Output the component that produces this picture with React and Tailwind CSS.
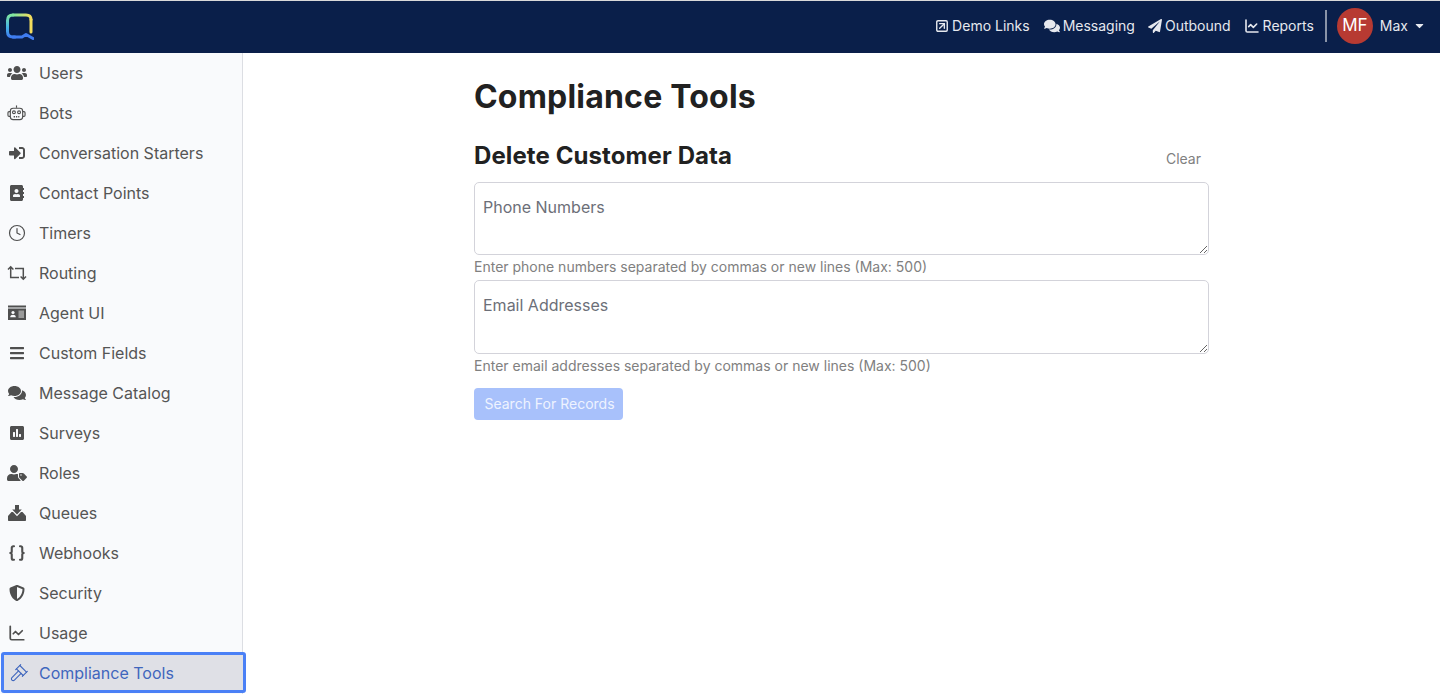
import { FaUsers, FaSignInAlt, FaAddressBook, FaBars, FaComments, FaPoll, FaUserTag, FaShieldAlt, FaPaperPlane, FaCaretDown } from "react-icons/fa";
import { LuBraces, LuGavel, LuClock, LuSquareArrowUpRight, LuChartLine } from "react-icons/lu";

function RobotIcon({ size }) {
  return (
    <svg width={size} height={size} viewBox="0 0 20 20" fill="none" stroke="currentColor" strokeWidth="1.2">
      <path d="M10 1.5V4" />
      <rect x="3.5" y="4.5" width="13" height="12" rx="3" />
      <circle cx="7.3" cy="8.7" r="1.5" />
      <circle cx="12.7" cy="8.7" r="1.5" />
      <path d="M7 13.5H13" strokeDasharray="1.4 1" strokeWidth="1.6" />
      <path d="M3.5 8H2.2C1.5 8 1 8.5 1 9.2V11.8C1 12.5 1.5 13 2.2 13H3.5M16.5 8H17.8C18.5 8 19 8.5 19 9.2V11.8C19 12.5 18.5 13 17.8 13H16.5" />
    </svg>
  );
}

function RetweetIcon({ size }) {
  return (
    <svg width={size} height={size} viewBox="0 0 20 20" fill="none" stroke="currentColor" strokeWidth="1.5">
      <path d="M1 6.5L3.7 3.8L6.4 6.5M3.7 4V14.5H12" />
      <path d="M13.6 13.5L16.3 16.2L19 13.5M16.3 16V5.5H8" />
    </svg>
  );
}

function IdCardIcon({ size }) {
  return (
    <svg width={size} height={size} viewBox="0 0 18 18">
      <rect x="0" y="1.5" width="18" height="2" fill="currentColor" />
      <rect x="0" y="4.5" width="18" height="11.5" fill="currentColor" />
      <circle cx="5" cy="8.5" r="1.6" fill="#f9fafc" />
      <path d="M2.2 13.2C2.2 11.5 3.5 10.8 5 10.8C6.5 10.8 7.8 11.5 7.8 13.2Z" fill="#f9fafc" />
      <rect x="10.5" y="6.5" width="5.5" height="7.5" fill="#9a9a9a" />
    </svg>
  );
}

function InboxIcon({ size }) {
  return (
    <svg width={size} height={size} viewBox="0 0 18 18" fill="currentColor">
      <path d="M7 1H11V5.5H13.8L9 10.5L4.2 5.5H7Z" />
      <path d="M3.5 8H5L9 12.2L13 8H14.5L18 12V16C18 16.6 17.6 17 17 17H1C0.4 17 0 16.6 0 16V12Z" />
    </svg>
  );
}

const NAV = [
  ["Users", FaUsers, 20, {}],
  ["Bots", RobotIcon, 19, {}],
  ["Conversation Starters", FaSignInAlt, 16, {}],
  ["Contact Points", FaAddressBook, 16, {}],
  ["Timers", LuClock, 18, { strokeWidth: 1.6 }],
  ["Routing", RetweetIcon, 20, {}],
  ["Agent UI", IdCardIcon, 18, {}],
  ["Custom Fields", FaBars, 16, {}],
  ["Message Catalog", FaComments, 18, {}],
  ["Surveys", FaPoll, 16, {}],
  ["Roles", FaUserTag, 20, {}],
  ["Queues", InboxIcon, 18, {}],
  ["Webhooks", LuBraces, 18, { strokeWidth: 2.8 }],
  ["Security", FaShieldAlt, 16, {}],
  ["Usage", LuChartLine, 18, { strokeWidth: 2.3 }],
];

const TOP_LINKS = [
  ["Demo Links", LuSquareArrowUpRight, 14, { strokeWidth: 2.4 }, "ml-[14px]"],
  ["Messaging", FaComments, 16, {}, "ml-[14px]"],
  ["Outbound", FaPaperPlane, 14, {}, "ml-[13px]"],
  ["Reports", LuChartLine, 16, { strokeWidth: 2.4 }, "ml-[13px]"],
];

function Logo() {
  return (
    <svg width="30" height="30" viewBox="0 0 30 30" fill="none">
      <defs>
        <linearGradient id="qleft" x1="0" y1="0" x2="0" y2="1">
          <stop offset="0" stopColor="#7fe6a0" />
          <stop offset="0.55" stopColor="#45b4e6" />
          <stop offset="1" stopColor="#3f7cf0" />
        </linearGradient>
        <linearGradient id="qtop" x1="0" y1="0" x2="1" y2="0">
          <stop offset="0" stopColor="#7fe6a0" />
          <stop offset="1" stopColor="#f2dc5d" />
        </linearGradient>
      </defs>
      <path d="M11 25H9C5.5 25 3.5 23 3.5 19.5V8.5C3.5 5 5.5 3 9 3" stroke="url(#qleft)" strokeWidth="3" strokeLinecap="round" />
      <path d="M9 3H22C25.5 3 27 4.5 27 7.5" stroke="url(#qtop)" strokeWidth="3" strokeLinecap="round" />
      <path d="M27 7.5V20" stroke="#f2dc5d" strokeWidth="3" strokeLinecap="round" />
      <path d="M9 25H18L22 22.5L29 26.5" stroke="#3f7cf0" strokeWidth="3" strokeLinecap="round" strokeLinejoin="round" />
    </svg>
  );
}

function NavItem({ label, Icon, size, extra }) {
  return (
    <div className="h-10 flex items-center shrink-0">
      <span className="w-[33px] flex justify-center shrink-0 text-[#4f4f4f]"><Icon size={size} {...extra} /></span>
      <span className="ml-[6px] text-[#555555]">{label}</span>
    </div>
  );
}

function Field({ placeholder, hint }) {
  return (
    <>
      <textarea placeholder={placeholder} className="block w-full h-[73.4px] rounded-[5px] border border-[#d3d3da] px-2 py-3 text-base leading-6 placeholder-[#6c6f78] outline-none" />
      <p className="mt-[1px] mb-[3px] text-sm leading-[21px] text-[#808080]">{hint}</p>
    </>
  );
}

export default function App() {
  return (
    <div className="h-[694px] flex flex-col overflow-hidden bg-white font-['Inter',sans-serif]">
      <div className="h-[1px] bg-[#d9d9d9] shrink-0" />
      <header className="h-[52px] shrink-0 bg-[#0a1f4a] flex items-center pl-[4px] pr-[14px]">
        <Logo />
        <nav className="ml-auto mb-[3px] flex items-center text-[14px] text-[#e6e8ee]">
          {TOP_LINKS.map(([label, Icon, size, extra, gap]) => (
            <span key={label} className={`flex items-center gap-[3px] ${gap}`}>
              <Icon size={size} {...extra} />
              {label}
            </span>
          ))}
          <span className="ml-[11px] h-[32px] w-[2px] bg-[#8a94a8]" />
          <span className="ml-[10px] w-[36px] h-[36px] rounded-full bg-[#b73a32] flex items-center justify-center text-[17px] text-white">MF</span>
          <span className="ml-[7px]">Max</span>
          <FaCaretDown size={13} className="ml-[5px]" />
        </nav>
      </header>
      <div className="flex flex-1 min-h-0">
        <aside className="w-[243px] shrink-0 bg-[#f9fafc] border-r border-[#dcdee3] flex flex-col relative">
          {NAV.map(([label, Icon, size, extra]) => (
            <NavItem key={label} label={label} Icon={Icon} size={size} extra={extra} />
          ))}
          <div className="h-[41px] -mt-[1px] w-[245px] flex items-center bg-[#dfe0e6] rounded-[3px] border-[3px] border-[#4a80f6] text-[#3f66bd] relative z-10 ml-[1px]">
            <span className="w-[29px] flex justify-center shrink-0"><LuGavel size={20} strokeWidth={1.3} /></span>
            <span className="ml-[6px]">Compliance Tools</span>
          </div>
        </aside>
        <main className="flex-1 min-w-0">
          <div className="w-[735px] ml-[231px] text-[#212121]">
            <h1 className="mt-[24px] text-[32px] leading-[40px] font-bold tracking-[0.2px]">Compliance Tools</h1>
            <div className="mt-[23px] flex items-center justify-between">
              <h2 className="text-[24px] leading-[32px] font-bold tracking-[0.1px]">Delete Customer Data</h2>
              <span className="mr-[8px] mt-[6px] text-sm text-[#808080]">Clear</span>
            </div>
            <div className="mt-[10px]">
              <Field placeholder="Phone Numbers" hint="Enter phone numbers separated by commas or new lines (Max: 500)" />
              <Field placeholder="Email Addresses" hint="Enter email addresses separated by commas or new lines (Max: 500)" />
            </div>
            <button className="mt-[9px] h-[32px] w-[149px] pl-[2px] rounded-[4px] bg-[#a8c1fb] text-sm text-[#eef3ff]">Search For Records</button>
          </div>
        </main>
      </div>
    </div>
  );
}
